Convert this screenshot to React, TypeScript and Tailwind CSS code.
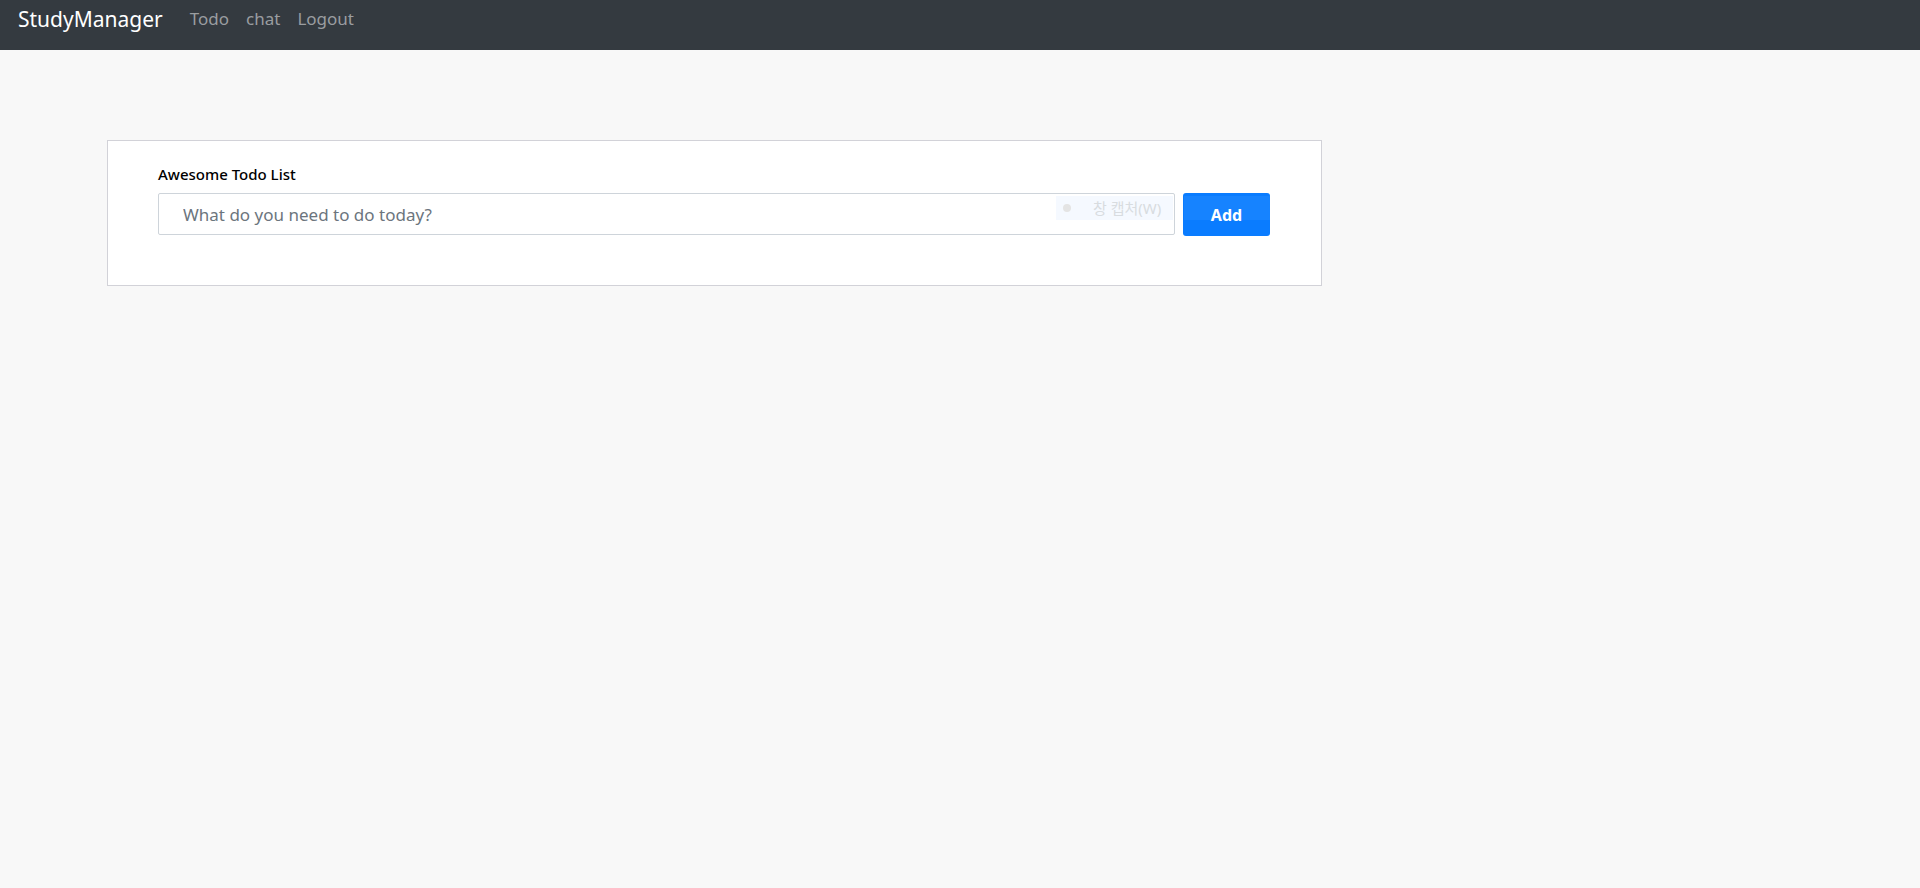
import React from "react";

const font = { fontFamily: '"Noto Sans", "Open Sans", "Noto Sans CJK KR", sans-serif' };

export default function App() {
  return (
    <div className="min-h-[888px] bg-[#f8f8f8]" style={font}>
      <nav className="flex h-[50px] items-start bg-[#343a40] px-[18px] pt-[3px]">
        <span className="text-[21px] leading-[32px] text-white">StudyManager</span>
        <div className="ml-[27px] mt-[1px] flex items-center gap-[17px] text-[17px] leading-[30px] text-[#9a9da0]">
          <a>Todo</a>
          <a>chat</a>
          <a>Logout</a>
        </div>
      </nav>
      <main className="pl-[107px] pt-[90px]">
        <section className="h-[146px] w-[1215px] border border-[#d2d2d8] bg-white px-[50px] pt-[22px]">
          <p className="text-[15px] font-medium leading-[22px] text-black">Awesome Todo List</p>
          <div className="relative mt-[8px] flex items-start gap-[8px]">
            <input
              className="h-[42px] w-[1017px] rounded-[2px] border border-[#ced4da] bg-white px-[24px] text-[17px] text-[#495057] outline-none placeholder:text-[#6c757d]"
              placeholder="What do you need to do today?"
            />
            <button className="h-[43px] w-[87px] rounded-[3px] bg-[#0a7cff] text-[16px] font-bold text-white">Add</button>
            {/* screen-capture tooltip left over in the shot */}
            <div className="pointer-events-none absolute left-[898px] top-[3px] flex h-[24px] w-[117px] items-center bg-[#eef5ff]/60 text-[15px] text-[#d8dce0]">
              <span className="ml-[7px] h-[8px] w-[8px] rounded-full bg-[#e4e4e4]" />
              <span className="ml-[22px]">창 캡처(W)</span>
            </div>
            <div className="pointer-events-none absolute left-[1026px] top-[3px] h-[24px] w-[86px] bg-white/5" />
          </div>
        </section>
      </main>
    </div>
  );
}
